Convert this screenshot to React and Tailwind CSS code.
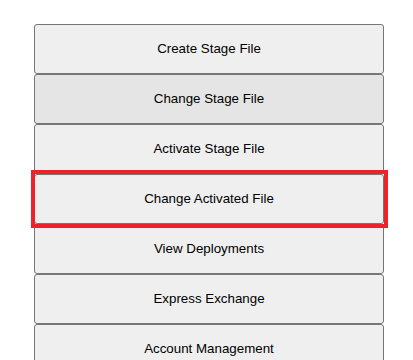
export default function App() {
  const items = [
    'Create Stage File',
    'Change Stage File',
    'Activate Stage File',
    'Change Activated File',
    'View Deployments',
    'Express Exchange',
    'Account Management',
  ];

  return (
    <main className="min-h-screen bg-white font-['Liberation_Sans',Arial,sans-serif]">
      <div className="flex flex-col w-[350px] ml-[34px] pt-6">
        {items.map((label, i) => (
          <button
            key={label}
            className={
              'relative h-[50px] shrink-0 border border-[#767676] rounded-[3px] text-[13.33px] text-black ' +
              (i === 1 ? 'bg-[#e5e5e5]' : 'bg-[#efefef]') +
              (i === 3 ? ' z-10' : '')
            }
          >
            {label}
            {/* red highlight box drawn over the button */}
            {i === 3 && (
              <span className="absolute -top-[5px] -bottom-[5px] -left-[4px] -right-[5px] border-4 border-[#ee2229] pointer-events-none" />
            )}
          </button>
        ))}
      </div>
    </main>
  );
}
